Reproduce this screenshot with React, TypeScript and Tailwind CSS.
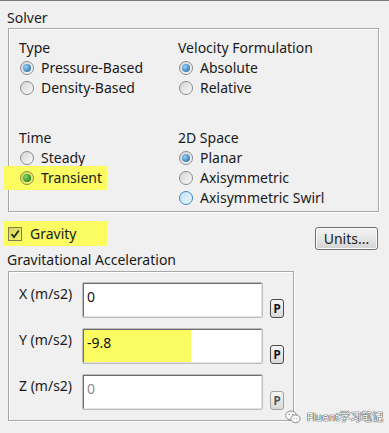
import React from "react";

type RadioTone = "normal" | "hl" | "hover";

const Radio = ({ on = false, tone = "normal" }: { on?: boolean; tone?: RadioTone }) => {
  const ring =
    tone === "hl"
      ? "border-[#8f8f4a] bg-gradient-to-br from-[#d2d256] to-[#f8f86c]"
      : tone === "hover"
        ? "border-[#3f86bd] bg-gradient-to-br from-[#bfe3f8] to-[#eaf6fd]"
        : "border-[#8b8b8b] bg-gradient-to-br from-[#d4d4d4] to-[#fbfbfb]";
  const dot =
    tone === "hl"
      ? "bg-[radial-gradient(circle_at_35%_35%,#7fdc6a,#146414)]"
      : "bg-[radial-gradient(circle_at_35%_35%,#8fd3f7,#1b5c98)]";
  return (
    <div className={`w-[14px] h-[14px] shrink-0 rounded-full border flex items-center justify-center ${ring}`}>
      {on && <div className={`w-[8px] h-[8px] rounded-full ${dot}`} />}
    </div>
  );
};

const RadioRow = ({ label, on, tone }: { label: string; on?: boolean; tone?: RadioTone }) => (
  <div className="flex items-center gap-[7px] h-[20px] pl-[1px]">
    <Radio on={on} tone={tone} />
    <span>{label}</span>
  </div>
);

const PButton = ({ disabled = false }: { disabled?: boolean }) => (
  <div
    className={`w-[14px] h-[19px] shrink-0 rounded-[3px] border-[1.5px] flex items-center justify-center bg-gradient-to-b from-[#f6f6f6] to-[#d9d9d9] font-['DejaVu_Sans_Mono',monospace] font-bold text-[12px] leading-none ${
      disabled ? "border-[#a0a0a0] text-[#555]" : "border-[#4a4a4a] text-[#111]"
    }`}
  >
    P
  </div>
);

type Field = { label: string; value: string; highlight?: boolean; disabled?: boolean };

const fields: Field[] = [
  { label: "X (m/s2)", value: "0" },
  { label: "Y (m/s2)", value: "-9.8", highlight: true },
  { label: "Z (m/s2)", value: "0", disabled: true },
];

const App = () => {
  return (
    <div className="relative w-[389px] h-[433px] overflow-hidden bg-[#f0f0f0] border-t border-[#7a7a7a] text-[14px] leading-[20px] text-[#1a1a1a] font-['Noto_Sans',sans-serif]">
      {/* Solver */}
      <div className="pt-[7px] pl-[7px] h-[27px] text-[#222]">Solver</div>
      <div className="ml-[8px] w-[371px] h-[184px] border border-[#a8a8a8] shadow-[inset_1px_1px_0_#fff,1px_1px_0_#fff] pt-[9px] pl-[10px] flex">
        <div className="w-[159px] flex flex-col">
          <div>Type</div>
          <RadioRow label="Pressure-Based" on />
          <RadioRow label="Density-Based" />
          <div className="mt-[30px]">Time</div>
          <RadioRow label="Steady" />
          <div className="-ml-[15px] pl-[15px] w-[103px] h-[24px] -mt-[2px] flex items-center bg-[#fbfb62]">
            <RadioRow label="Transient" on tone="hl" />
          </div>
        </div>
        <div className="flex flex-col">
          <div>Velocity Formulation</div>
          <RadioRow label="Absolute" on />
          <RadioRow label="Relative" />
          <div className="mt-[30px]">2D Space</div>
          <RadioRow label="Planar" on />
          <RadioRow label="Axisymmetric" />
          <RadioRow label="Axisymmetric Swirl" tone="hover" />
        </div>
      </div>

      {/* Gravity + Units */}
      <div className="ml-[4px] w-[374px] h-[29px] mt-[9px] flex items-start">
        <div className="w-[103px] h-[25px] bg-[#fbfb62] flex items-center gap-[8px] pl-[4px]">
          <div className="w-[14px] h-[14px] border border-[#7f7f55] bg-gradient-to-br from-[#d6d65a] to-[#f4f46c] flex items-center justify-center">
            <svg width="10" height="10" viewBox="0 0 10 10">
              <path d="M1.5 5.2 L4 8 L8.8 1.5" fill="none" stroke="#26310c" strokeWidth="1.8" />
            </svg>
          </div>
          <span>Gravity</span>
        </div>
        <button className="ml-auto mt-[6px] w-[63px] h-[23px] rounded-[3px] border border-[#707070] bg-gradient-to-b from-[#f3f3f3] via-[#e6e6e6] to-[#d2d2d2] text-[14px] leading-[20px] text-[#1a1a1a] shadow-[inset_0_0_0_1px_#fcfcfc]">
          Units...
        </button>
      </div>

      {/* Gravitational Acceleration */}
      <div className="pl-[7px] h-[20px]">Gravitational Acceleration</div>
      <div className="ml-[8px] mt-[1px] w-[286px] h-[150px] border border-[#a8a8a8] shadow-[inset_1px_1px_0_#fff,1px_1px_0_#fff] pt-[10px] pl-[10px] flex flex-col gap-[10px]">
        {fields.map((f) => (
          <div key={f.label} className="flex h-[36px]">
            <div className="w-[63px] pt-[2px]">{f.label}</div>
            <div className="w-[181px] h-[36px] rounded-[2px] border border-[#bcbcbc]">
              <div className="h-full border border-[#6e6e6e] border-r-[#e4e4e4] border-b-[#e4e4e4] bg-white flex">
                <div
                  className={`h-full pl-[3px] pt-[3px] ${f.highlight ? "w-[107px] bg-[#fbfb62]" : ""} ${
                    f.disabled ? "text-[#8a8a8a]" : "text-[#111]"
                  }`}
                >
                  {f.value}
                </div>
              </div>
            </div>
            <div className="ml-[7px] self-end">
              <PButton disabled={f.disabled} />
            </div>
          </div>
        ))}
      </div>

      {/* watermark */}
      <div className="absolute left-[285px] top-[409px] flex items-center gap-[6px]">
        <svg width="16" height="14" viewBox="0 0 16 14">
          <ellipse cx="6" cy="5.5" rx="5.3" ry="4.5" fill="#fff" stroke="#8a8a8a" strokeWidth="1" />
          <ellipse cx="10.5" cy="8.8" rx="4.6" ry="3.9" fill="#fff" stroke="#8a8a8a" strokeWidth="1" />
          <circle cx="4.2" cy="4.5" r="0.8" fill="#8a8a8a" />
          <circle cx="7.6" cy="4.5" r="0.8" fill="#8a8a8a" />
          <circle cx="9" cy="8.3" r="0.6" fill="#8a8a8a" />
          <circle cx="12" cy="8.3" r="0.6" fill="#8a8a8a" />
        </svg>
        <span className="text-[11px] leading-[14px] text-white [text-shadow:0_0_1px_#333,0_0_1px_#333,0_0_1px_#444] font-['Noto_Sans','Noto_Sans_CJK_SC',sans-serif]">
          Fluent学习笔记
        </span>
      </div>
    </div>
  );
};

export default App;
